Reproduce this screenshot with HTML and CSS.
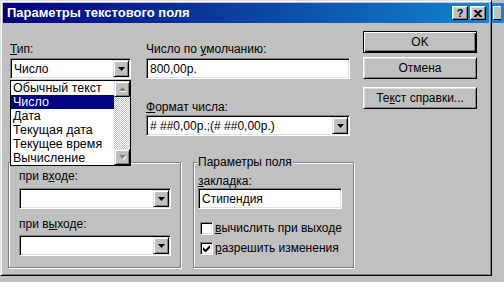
FILE: index.html
```html
<!DOCTYPE html>
<html lang="ru">
<head>
<meta charset="utf-8">
<title>Параметры текстового поля</title>
<link rel="stylesheet" href="styles.css">
</head>
<body>
<div class="screen">
  <div class="window">
    <div class="titlebar">
      <span class="title">Параметры текстового поля</span>
      <div class="tbtns">
        <span class="tbtn help">?</span>
        <span class="tbtn close"><svg width="8" height="7" viewBox="0 0 8 7"><path d="M0 0h2l2 2 2-2h2v1L5 3.5 8 6v1H6L4 5 2 7H0V6l3-2.5L0 1z" fill="#000"/></svg></span>
      </div>
    </div>
    <div class="body">
      <div class="main">
        <div class="top">
          <div class="col-type">
            <div class="lbl"><u>Т</u>ип:</div>
            <div class="combo"><span class="val">Число</span><span class="dd"><svg width="7" height="4" viewBox="0 0 7 4"><path d="M0 0h7L3.5 4z" fill="#000"/></svg></span></div>
          </div>
          <div class="col-mid">
            <div class="lbl">Число по <u>у</u>молчанию:</div>
            <div class="textbox wide">800,00р.</div>
            <div class="lbl lbl-format"><u>Ф</u>ормат числа:</div>
            <div class="combo wide"><span class="val">#&nbsp;##0,00р.;(#&nbsp;##0,00р.)</span><span class="dd"><svg width="7" height="4" viewBox="0 0 7 4"><path d="M0 0h7L3.5 4z" fill="#000"/></svg></span></div>
          </div>
        </div>
        <div class="bottom">
          <div class="group macro">
            <div class="lbl">при в<u>х</u>оде:</div>
            <div class="combo gcombo"><span class="val"></span><span class="dd"><svg width="7" height="4" viewBox="0 0 7 4"><path d="M0 0h7L3.5 4z" fill="#000"/></svg></span></div>
            <div class="lbl lbl-exit">при в<u>ы</u>ходе:</div>
            <div class="combo gcombo exit"><span class="val"></span><span class="dd"><svg width="7" height="4" viewBox="0 0 7 4"><path d="M0 0h7L3.5 4z" fill="#000"/></svg></span></div>
          </div>
          <fieldset class="group field">
            <legend>Параметры поля</legend>
            <div class="lbl lbl-mark"><u>з</u>акладка:</div>
            <div class="textbox mark">Стипендия</div>
            <div class="check first"><span class="box"></span><span><u>в</u>ычислить при выходе</span></div>
            <div class="check second"><span class="box"><svg width="7" height="7" viewBox="0 0 7 7"><path d="M0 2v3l2 2h1l4-4V0L2.5 4.5z" fill="#000"/></svg></span><span><u>р</u>азрешить изменения</span></div>
          </fieldset>
        </div>
      </div>
      <div class="buttons">
        <div class="btn default"><span class="btn-in">OK</span></div>
        <div class="btn cancel"><span class="btn-in">Отмена</span></div>
        <div class="btn helptext"><span class="btn-in">Те<u>к</u>ст справки...</span></div>
      </div>
    </div>
    <div class="droplist">
      <div class="items">
        <div class="item">Обычный текст</div>
        <div class="item sel">Число</div>
        <div class="item">Дата</div>
        <div class="item">Текущая дата</div>
        <div class="item">Текущее время</div>
        <div class="item">Вычисление</div>
      </div>
      <div class="vscroll">
        <span class="sbtn"><svg width="7" height="5" viewBox="0 0 7 5"><path d="M4 1L8 5H0z" fill="#fff"/><path d="M3.5 0L7 4H0z" fill="#808080"/></svg></span>
        <span class="track"></span>
        <span class="sbtn"><svg width="7" height="5" viewBox="0 0 7 5"><path d="M1 1h7L4.5 5z" fill="#fff"/><path d="M0 0h7L3.5 4z" fill="#808080"/></svg></span>
      </div>
    </div>
  </div>
  <div class="edge">
    <div class="edge-title"><span class="edge-btn"></span></div>
  </div>
</div>
</body>
</html>
```
FILE: styles.css
```css
html, body {
  margin: 0;
  padding: 0;
  background: #c0c0c0;
}
body {
  font-family: "Liberation Sans", Arial, sans-serif;
  font-size: 12px;
  line-height: 14px;
  color: #000;
}
u { text-decoration: underline; text-underline-offset: 1px; }

.screen {
  display: flex;
  width: 504px;
  height: 282px;
  overflow: hidden;
}

.window {
  position: relative;
  box-sizing: border-box;
  width: 492px;
  height: 276px;
  flex: none;
  border: 1px solid;
  border-color: #dfdfdf #000 #000 #dfdfdf;
  box-shadow: inset 1px 1px #fff, inset -1px -1px #808080;
  padding: 2px;
  background: #c0c0c0;
  display: flex;
  flex-direction: column;
}

.titlebar {
  height: 20px;
  flex: none;
  display: flex;
  align-items: center;
  justify-content: space-between;
  padding: 0 3px 0 4px;
  background: linear-gradient(90deg, #000080 0%, #0a3c9c 45%, #1084d0 100%);
}
.title {
  color: #fff;
  font-weight: bold;
  font-size: 13px;
  line-height: 20px;
}
.tbtns { display: flex; gap: 2px; }
.tbtn {
  box-sizing: border-box;
  width: 16px;
  height: 14px;
  background: #c0c0c0;
  border: 1px solid;
  border-color: #fff #000 #000 #fff;
  box-shadow: inset -1px -1px #808080, inset 1px 1px #dfdfdf;
  display: flex;
  align-items: center;
  justify-content: center;
  font-weight: bold;
  font-size: 11px;
  line-height: 12px;
}

.body {
  flex: 1;
  display: flex;
  padding: 8px 0 0 5px;
}
.main { width: 346px; flex: none; }

.top { display: flex; margin-top: 11px; }
.col-type { margin-left: 2px; width: 121px; }
.col-mid { margin-left: 15px; width: 204px; }

.lbl { height: 14px; white-space: nowrap; }
.col-type .lbl, .col-mid .lbl { margin-bottom: 2px; }
.col-mid .lbl-format { margin-top: 21px; margin-bottom: 1px; }

.textbox, .combo {
  box-sizing: border-box;
  height: 21px;
  border: 1px solid;
  border-color: #808080 #fff #fff #808080;
  box-shadow: inset 1px 1px #000, inset -1px -1px #dfdfdf;
  background: #fff;
  display: flex;
  align-items: center;
  padding: 1px;
  white-space: nowrap;
}
.textbox { padding-left: 3px; }
.combo .val { flex: 1; padding-left: 2px; overflow: hidden; }
.dd {
  box-sizing: border-box;
  width: 16px;
  height: 17px;
  flex: none;
  background: #c0c0c0;
  border: 1px solid;
  border-color: #dfdfdf #000 #000 #dfdfdf;
  box-shadow: inset 1px 1px #fff, inset -1px -1px #808080;
  display: flex;
  align-items: center;
  justify-content: center;
}
.dd svg { margin-top: 1px; }

.bottom { display: flex; margin-top: 19px; }

.group {
  box-sizing: border-box;
  margin: 0;
  border: 1px solid #808080;
  box-shadow: inset 1px 1px #fff, 1px 1px #fff;
}
.macro {
  width: 173px;
  height: 106px;
  margin-top: 7px;
  padding: 6px 9px 0 10px;
}
.macro .combo { margin-top: 5px; }
.macro .lbl-exit { margin-top: 8px; }
.macro .combo.exit { margin-top: 4px; }

.field {
  width: 161px;
  height: 113px;
  margin-left: 12px;
  padding: 0 0 0 4px;
  min-width: 0;
}
.field legend {
  padding: 0 1px;
  margin-left: -1px;
  background: #c0c0c0;
  line-height: 14px;
}
.field .lbl-mark { margin-top: 5px; }
.textbox.mark { width: 144px; }

.check {
  display: flex;
  align-items: center;
  gap: 2px;
  height: 13px;
  line-height: 13px;
  margin-left: 2px;
  white-space: nowrap;
}
.check.first { margin-top: 13px; }
.check.second { margin-top: 7px; }
.box {
  box-sizing: border-box;
  width: 13px;
  height: 13px;
  flex: none;
  border: 1px solid;
  border-color: #808080 #fff #fff #808080;
  box-shadow: inset 1px 1px #000, inset -1px -1px #dfdfdf;
  background: #fff;
  display: flex;
  align-items: center;
  justify-content: center;
}

.buttons {
  margin-left: 9px;
  width: 114px;
  display: flex;
  flex-direction: column;
}
.btn {
  box-sizing: border-box;
  height: 22px;
  background: #c0c0c0;
  border: 1px solid;
  border-color: #fff #000 #000 #fff;
  box-shadow: inset 1px 1px #dfdfdf, inset -1px -1px #808080;
  display: flex;
  align-items: center;
  justify-content: center;
  white-space: nowrap;
}
.btn.default {
  border: 1px solid #000;
  box-shadow: inset 1px 1px #fff, inset -1px -1px #000, inset -2px -2px #808080;
}
.btn.cancel { margin-top: 4px; }
.btn.helptext { margin-top: 8px; }

.droplist {
  position: absolute;
  left: 9px;
  top: 79px;
  width: 121px;
  box-sizing: border-box;
  border: 1px solid #000;
  background: #fff;
  display: flex;
}
.items { flex: 1; }
.item {
  height: 14px;
  line-height: 14px;
  padding-left: 2px;
  white-space: nowrap;
  font-size: 12.5px;
}
.item.sel { background: #000080; color: #fff; }
.vscroll {
  width: 16px;
  display: flex;
  flex-direction: column;
}
.sbtn {
  box-sizing: border-box;
  height: 16px;
  flex: none;
  background: #c0c0c0;
  border: 1px solid;
  border-color: #dfdfdf #000 #000 #dfdfdf;
  box-shadow: inset 1px 1px #fff, inset -1px -1px #808080;
  display: flex;
  align-items: center;
  justify-content: center;
}
.track {
  flex: 1;
  background: repeating-conic-gradient(#fff 0 25%, #c0c0c0 0 50%) 0 0 / 2px 2px;
}

.edge {
  flex: 1;
  position: relative;
}
.edge-title {
  margin-top: 3px;
  height: 20px;
  background: #1084d0;
  display: flex;
  align-items: center;
}
.edge-btn {
  box-sizing: border-box;
  width: 8px;
  height: 14px;
  margin-left: 1px;
  background: #c0c0c0;
  border-left: 1px solid #fff;
  border-top: 1px solid #fff;
  border-bottom: 1px solid #000;
}
```
